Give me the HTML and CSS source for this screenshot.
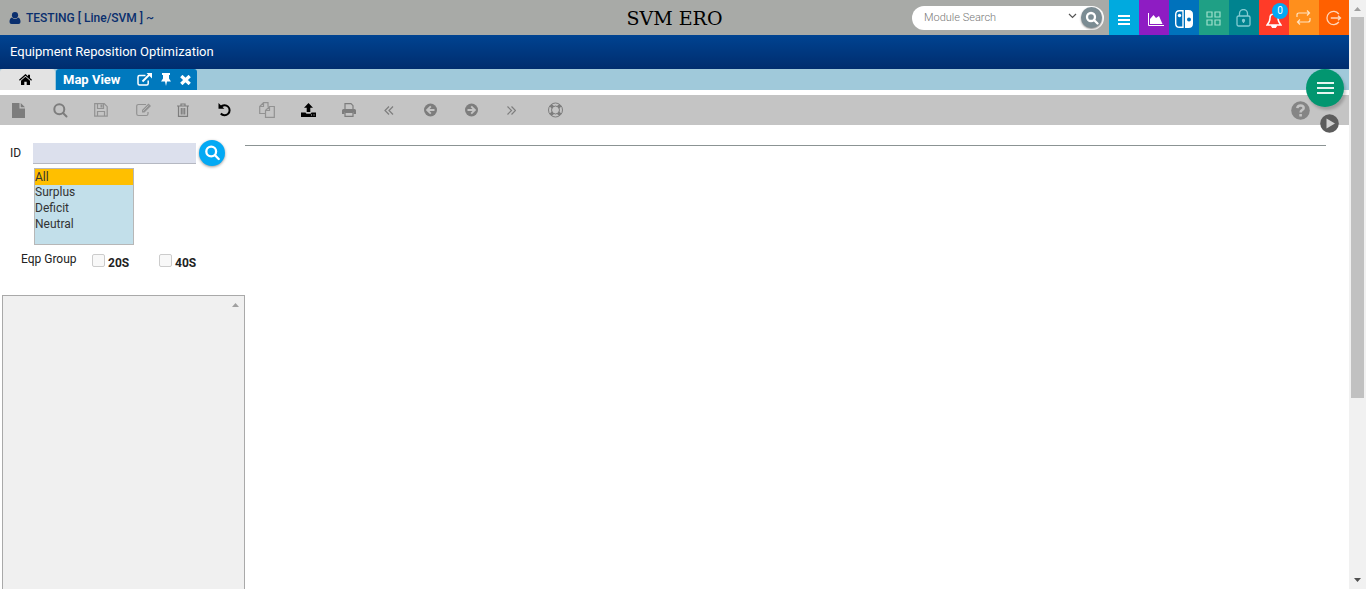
FILE: index.html
```
<!DOCTYPE html>
<html lang="en">
<head>
<meta charset="utf-8">
<title>SVM ERO</title>
<link rel="stylesheet" href="styles.css">
</head>
<body>
<div class="page">
  <header class="topbar">
    <a class="user" href="#">
      <svg width="12" height="12" viewBox="0 0 12 12" fill="currentColor"><circle cx="6" cy="3.2" r="3.1"/><path d="M3 5.5Q6 8.500 9 5.500Q11.500 6 11.500 10Q11.500 12 9.500 12H2.500Q.5 12 .5 10Q.5 6 3 5.500z"/></svg>
      <span>TESTING [ Line/SVM ] ~</span>
    </a>
    <h1 class="title">SVM ERO</h1>
    <div class="top-right">
      <form class="module-search">
        <input class="module-input" type="text" placeholder="Module Search" aria-label="Module Search">
        <svg class="caret" width="9" height="6" viewBox="0 0 9 6" fill="none" stroke="#555" stroke-width="1.2"><path d="M1 1l3.500 3.500L8 1"/></svg>
        <button class="module-go" type="button" aria-label="Search"><svg width="14" height="14" viewBox="0 0 14 14" fill="none" stroke="#fff" stroke-width="2.300"><circle cx="6" cy="6" r="4"/><path d="M9 9l3.500 3.500" stroke-linecap="round"/></svg></button>
      </form>
      <nav class="tiles">
        <button class="tile cyan" aria-label="Menu"><svg width="14" height="12" viewBox="0 0 14 12" stroke="#fff" stroke-width="2"><path d="M1 2h12M1 6h12M1 10h12"/></svg></button>
        <button class="tile purple" aria-label="Charts"><svg width="16" height="13" viewBox="0 0 16 13"><path d="M.5 0v12.500H16" fill="none" stroke="#fff"/><path d="M2 11V6l3.500-4L8 5l3-2 3.500 8z" fill="#fff"/></svg></button>
        <button class="tile blue" aria-label="Switch"><svg width="18" height="18" viewBox="0 0 18 18"><path d="M8 .7H4.500Q.7.7.7 4.500v9q0 3.800 3.800 3.800H8z" fill="none" stroke="#fff" stroke-width="1.400"/><circle cx="4.500" cy="5.500" r="1.700" fill="#fff"/><path d="M10 0h3.500Q18 0 18 4.500v9q0 4.500-4.500 4.500H10z" fill="#fff"/><circle cx="14" cy="9.500" r="2" fill="#0072bc"/></svg></button>
        <button class="tile green" aria-label="Apps"><svg width="16" height="15" viewBox="0 0 16 15" fill="none" stroke="#9fe0cc" stroke-width="1.200"><path d="M1 1h5v5H1zM9 1h5v5H9zM1 9h5v5H1zM9 9h5v5H9z"/></svg></button>
        <button class="tile teal" aria-label="Lock"><svg width="16" height="18" viewBox="0 0 16 18" fill="none" stroke="#83cbd2" stroke-width="1.300"><rect x="1" y="7" width="13" height="10" rx="1.500"/><path d="M3.500 7V4.500a4 4 0 018 0V7M7.500 11v3"/><circle cx="7.500" cy="11.500" r="1" fill="#83cbd2"/></svg></button>
        <button class="tile red" aria-label="Notifications"><svg width="16" height="16" viewBox="0 0 16 16"><path d="M1 13Q4 10 4 6Q4 2 8 2T12 6Q12 10 15 13z" fill="none" stroke="#fff" stroke-width="1.500"/><path d="M8 0v2M5.500 13.500a2.500 2.500 0 005 0z" fill="#fff" stroke="#fff"/></svg><span class="badge">0</span></button>
        <button class="tile orange" aria-label="Swap"><svg width="16" height="15" viewBox="0 0 16 15" fill="none" stroke="#ffe3c2" stroke-width="1.200"><path d="M1 7V5q0-2 2-2h10.500M11 .5L13.500 3 11 5.500M14 8v2q0 2-2 2H1.500M4 9.500L1.500 12 4 14.500"/></svg></button>
        <button class="tile deep" aria-label="Sign out"><svg width="16" height="16" viewBox="0 0 16 16" fill="none" stroke="#ffd5b8" stroke-width="1.300"><path d="M12.800 4A6.600 6.600 0 1012.800 12M4.800 8h10M12 5.800L14.500 8l-2.500 2.200"/></svg></button>
      </nav>
    </div>
  </header>
  <div class="banner">Equipment Reposition Optimization</div>
  <nav class="tabs">
    <a class="tab home" href="#" aria-label="Home"><svg width="13" height="11" viewBox="0 0 13 11"><path d="M6.500 0L9 2.200V.8h2v3.200l2 1.800-.8.900L6.500 1.700.8 6.700 0 5.800z"/><path d="M6.500 2.800L11 6.700V11H7.700V7.700H5.300V11H2V6.700z"/></svg></a>
    <div class="tab active">
      <a class="tab-label" href="#">Map View</a>
      <button class="tab-button" aria-label="Open in new window"><svg width="15" height="13" viewBox="0 0 15 13" fill="none" stroke="#fff"><path d="M8.500 2.500H2.500Q1 2.500 1 4v6.500Q1 12 2.500 12h7.200q1.500 0 1.500-1.500V7.500" stroke-width="1.500"/><path d="M5.500 8.500L12.500 1.500" stroke-width="2"/><path d="M9.500 0H15v5.500z" fill="#fff" stroke="none"/></svg></button>
      <button class="tab-button" aria-label="Pin"><svg width="10" height="13" viewBox="0 0 10 13" fill="#fff"><path d="M1 0h8v2h-1v3.500L10 8.500H6L5 13l-1-4.500H0l2-3V2H1z"/></svg></button>
      <button class="tab-button" aria-label="Close"><svg width="11" height="10" viewBox="0 0 11 10" stroke="#fff" stroke-width="3.300"><path d="M1.300 1l8.400 8M9.700 1L1.300 9"/></svg></button>
    </div>
  </nav>
  <div class="toolbar">
    <div class="tools">
      <button class="tool" aria-label="New"><svg width="13" height="15" viewBox="0 0 13 15" fill="currentColor"><path d="M0 0h7.500v5.500H13V15H0zM8.700 0L13 4.300H8.700z"/></svg></button>
      <button class="tool" aria-label="Find"><svg width="15" height="15" viewBox="0 0 15 15" fill="none" stroke="currentColor" stroke-width="2"><circle cx="6.300" cy="6.300" r="5"/><path d="M10 10l3.500 3.500" stroke-linecap="round"/></svg></button>
      <button class="tool pale" aria-label="Save"><svg width="14" height="14" viewBox="0 0 14 14" fill="none" stroke="currentColor" stroke-width="1.200"><path d="M.7.7h9.500l3 3v9.500H.7zM3.500 13V8.500h7V13M3.500 1v4.500h6V1"/><path d="M6.500 1.500h2v3h-2z" fill="currentColor" stroke="none"/></svg></button>
      <button class="tool pale" aria-label="Edit"><svg width="16" height="14" viewBox="0 0 16 14" fill="none" stroke="currentColor" stroke-width="1.200"><path d="M10 1.500H2.500Q.7 1.500.7 3.300v7.400q0 1.800 1.800 1.800h7.700q1.800 0 1.800-1.800V9"/><path d="M6 9.500V7l6.500-6.500L15 3 8.500 9.500z" fill="currentColor" stroke="none"/><path d="M7 8l5.500-5.500" stroke="#c4c4c4" stroke-width=".7"/></svg></button>
      <button class="tool" aria-label="Delete"><svg width="12" height="14" viewBox="0 0 12 14" fill="none" stroke="currentColor" stroke-width="1.200"><path d="M0 3h12M4 3V1h4v2M1.500 3v10.300h9V3M4.300 5v6.500M6 5v6.500M7.700 5v6.500"/></svg></button>
      <button class="tool on" aria-label="Undo"><svg width="14" height="14" viewBox="0 0 14 14"><path d="M2.800 4A5 5 0 112.800 10.500" fill="none" stroke="currentColor" stroke-width="2"/><path d="M.5 0v5.800h5.800z" fill="currentColor"/></svg></button>
      <button class="tool pale" aria-label="Copy"><svg width="16" height="16" viewBox="0 0 16 16" fill="none" stroke="currentColor" stroke-width="1.200"><path d="M6 11.500H.7V4.500L4.500.7H9v4M4.500.7v3.800H.7M6.500 8.500l4-4h4.800v10.800H6.500zM10.500 4.500v4h-4"/></svg></button>
      <button class="tool on" aria-label="Upload"><svg width="15" height="14" viewBox="0 0 15 14" fill="currentColor"><path d="M7.500 0L12 4.800H9.300V9H5.700V4.800H3z"/><path d="M0 9.500h4.500q.5 1.200 1.500 1.200h3q1 0 1.500-1.200H15V14H0z"/><path d="M10 12h1M12.500 12h1" stroke="#c4c4c4"/></svg></button>
      <button class="tool" aria-label="Print"><svg width="14" height="14" viewBox="0 0 14 14" fill="none" stroke="currentColor" stroke-width="1.200"><path d="M3 6V.7h6L11 2.700V6M3 9.500h8v3.800H3z"/><path d="M0 11V7.500Q0 6 1.500 6h11Q14 6 14 7.500V11h-2.500V9h-9v2z" fill="currentColor" stroke="none"/></svg></button>
      <button class="tool" aria-label="First"><svg width="11" height="9" viewBox="0 0 11 9" fill="none" stroke="currentColor" stroke-width="1.200"><path d="M6 .5l-4 4 4 4M10 .5l-4 4 4 4"/></svg></button>
      <button class="tool" aria-label="Previous"><svg width="14" height="14" viewBox="0 0 14 14"><circle cx="6.500" cy="7" r="6.500" fill="currentColor"/><path d="M10.500 7H3.500M6.800 3.300L3.100 7l3.700 3.700" fill="none" stroke="#c4c4c4" stroke-width="1.900"/></svg></button>
      <button class="tool" aria-label="Next"><svg width="14" height="14" viewBox="0 0 14 14"><circle cx="6.500" cy="7" r="6.500" fill="currentColor"/><path d="M2.500 7h7M6.200 3.300L9.900 7l-3.700 3.700" fill="none" stroke="#c4c4c4" stroke-width="1.900"/></svg></button>
      <button class="tool" aria-label="Last"><svg width="9" height="9" viewBox="0 0 9 9" fill="none" stroke="currentColor" stroke-width="1.200"><path d="M.5.500l4 4-4 4M4.500.500l4 4-4 4"/></svg></button>
      <button class="tool" aria-label="Support"><svg width="16" height="16" viewBox="0 0 16 16" fill="none" stroke="currentColor"><circle cx="7.500" cy="8" r="7"/><circle cx="7.500" cy="8" r="4"/><path d="M2.700 3.200l2.300 2.300M12.300 3.200l-2.300 2.300M2.700 12.800l2.300-2.300M12.300 12.800l-2.300-2.300" stroke-width="3.300"/></svg></button>
    </div>
    <button class="help" aria-label="Help"><svg width="19" height="19" viewBox="0 0 19 19"><circle cx="9.500" cy="9.500" r="9.300" fill="#858585"/><path d="M6.300 7.200Q6.500 4.500 9.500 4.500T12.700 7Q12.700 8.200 11 9.200Q9.600 10 9.600 11.500" fill="none" stroke="#c4c4c4" stroke-width="2.500"/><path d="M8.300 13h2.600v2.500H8.300z" fill="#c4c4c4"/></svg></button>
  </div>
  <div class="floating">
    <button class="fab" aria-label="Open menu"><svg width="17" height="12" viewBox="0 0 17 12" stroke="#e6f5f0" stroke-width="2"><path d="M0 1h17M0 6h17M0 11h17"/></svg></button>
    <button class="play" aria-label="Play"><svg width="19" height="19" viewBox="0 0 19 19"><circle cx="9.500" cy="9.500" r="9.300" fill="#5c5c5c"/><path d="M6.500 4.500l8.500 5-8.500 5z" fill="#d0d0d0"/></svg></button>
  </div>
  <main class="content">
    <form class="filters">
      <div class="id-row">
        <label for="eq-id">ID</label>
        <input class="id-input" id="eq-id" type="text">
        <button class="find" type="button" aria-label="Search ID"><svg width="16" height="16" viewBox="0 0 16 16" fill="none" stroke="#fff" stroke-width="2.300"><circle cx="7.200" cy="6.500" r="4.900"/><path d="M11 10.300l3.700 3.700" stroke-linecap="round"/></svg></button>
      </div>
      <select class="status" size="4" aria-label="Status">
        <option class="chosen">All</option>
        <option>Surplus</option>
        <option>Deficit</option>
        <option>Neutral</option>
      </select>
      <div class="group-row">
        <span class="group-label">Eqp Group</span>
        <label class="check"><input class="box" type="checkbox"><span>20S</span></label>
        <label class="check"><input class="box" type="checkbox"><span>40S</span></label>
      </div>
      <div class="list"><svg width="7" height="4" viewBox="0 0 7 4"><path d="M0 4L3.500 0 7 4z" fill="#a0a0a0"/></svg></div>
    </form>
    <section class="map"></section>
  </main>
</div>
<div class="scroll">
  <svg width="17" height="17" viewBox="0 0 17 17"><path d="M5 11l3.500-4 3.500 4z" fill="#a0a0a0"/></svg>
  <div class="thumb"></div>
  <svg class="down" width="17" height="17" viewBox="0 0 17 17"><path d="M5 6h7l-3.500 4z" fill="#505050"/></svg>
</div>
</body>
</html>
```
FILE: styles.css
```
* { box-sizing: border-box; }
body {
  margin: 0;
  height: 100vh;
  display: flex;
  overflow: hidden;
  background: #fff;
  color: #222;
  font: 12px/16px Roboto, "Liberation Sans", sans-serif;
}
svg { display: block; flex: none; }
a { color: inherit; text-decoration: none; }
button { border: 0; padding: 0; background: none; font: inherit; color: inherit; display: flex; align-items: center; justify-content: center; }
input { font: inherit; }

.page { position: relative; flex: 1; min-width: 0; display: flex; flex-direction: column; }
.topbar { flex: none; height: 35px; display: grid; grid-template-columns: 1fr auto 1fr; align-items: center; background: #a8aaa7; }
.user { display: flex; align-items: center; gap: 5px; padding-left: 9px; color: #0a2f6e; font-weight: 500; }
.title { margin: 0; color: #000; font: 19px/24px "DejaVu Serif", serif; }
.top-right { display: flex; justify-content: flex-end; align-items: center; gap: 5px; }
.module-search { display: flex; align-items: center; gap: 4px; width: 192px; height: 24px; padding: 0 2px 0 12px; border-radius: 12px; background: #fff; }
.module-input { flex: 1; min-width: 0; padding: 0; border: 0; background: none; font-size: 11px; font-weight: 300; }
.module-input::placeholder { color: #777; opacity: 1; }
.caret { margin-bottom: 4px; }
.module-go { width: 21px; height: 21px; border-radius: 50%; background: #7b8c93; box-shadow: 0 1px 2px #888; }
.tiles { display: flex; }
.tile { position: relative; width: 30px; height: 35px; }
.cyan { background: #00aadf; padding-top: 4px; }
.purple { background: #8e1cc3; padding: 3px 0 0 3px; }
.blue { background: #0072bc; padding-top: 3px; }
.green { background: #1fa085; padding-top: 2px; }
.teal { background: #00838f; }
.red { background: #ff3b28; padding-top: 4px; }
.orange { background: #ff8f1c; }
.deep { background: #ff6000; }
.badge { position: absolute; top: 3px; right: 1px; width: 16px; height: 16px; border-radius: 50%; background: #03a9f4; color: #fff; font-size: 10px; line-height: 16px; }

.banner { flex: none; height: 34px; padding: 9px 10px; color: #fff; font-size: 13px; background: linear-gradient(#004391, #002d6e); }
.tabs { flex: none; height: 21px; display: flex; background: #a0c9da; }
.tab { display: flex; align-items: center; border-radius: 3px 3px 0 0; }
.home { width: 55px; margin-right: 1px; padding-left: 19px; background: #e3e3e3; color: #000; }
.active { gap: 9px; padding: 0 6px 0 7px; background: #0079be; color: #fff; font-size: 13px; font-weight: 700; }
.tab-label { margin-right: 8px; }

.toolbar { flex: none; height: 30px; margin-top: 5px; padding: 0 39px 0 12px; display: flex; justify-content: space-between; align-items: center; background: #c4c4c4; }
.tools { display: flex; width: 577px; }
.tool { flex: 1; justify-content: flex-start; color: #7d7d7d; }
.pale { color: #929292; }
.on { color: #000; }

.floating { position: absolute; top: 69px; right: 5px; display: flex; flex-direction: column; align-items: center; gap: 7px; }
.fab { width: 38px; height: 38px; border-radius: 50%; background: #029670; box-shadow: 2px 3px 3px rgba(0, 0, 0, .2); }
.play { align-self: flex-end; margin-right: 5px; }

.content { flex: 1; min-height: 0; display: flex; }
.filters { width: 245px; padding-top: 14px; display: flex; flex-direction: column; }
.id-row { display: flex; align-items: center; height: 29px; padding: 0 0 1px 10px; }
.id-row label { width: 23px; }
.id-input { width: 163px; height: 21px; margin-right: 3px; border: 0; border-bottom: 1px solid #b5b8c2; background: #dce0ed; }
.find { width: 26px; height: 26px; border-radius: 50%; background: #03a9f4; box-shadow: 0 1px 3px #999; }
.status { width: 100px; height: 77px; margin-left: 34px; padding: 0; border: 1px solid #b7b7b7; border-radius: 0; outline: 0; overflow: hidden; background: #c2dfea; color: #333; font: inherit; }
.status option { min-height: 16px; padding: 0; }
.status .chosen { padding-top: 1px; background: #ffbf00; }
.group-row { display: flex; align-items: flex-start; padding: 6px 0 0 21px; }
.group-label { width: 71px; }
.check { display: flex; gap: 3px; width: 67px; padding-top: 3px; font-weight: 700; }
.box { appearance: none; width: 13px; height: 13px; margin: 0; border: 1px solid #ccc; border-radius: 2px; background: #f8f8f8; }
.check span { padding-top: 1px; }
.list { flex: 1; margin: 24px 0 0 2px; padding: 7px 5px 0 0; border: 1px solid #a9a9a9; border-bottom: 0; background: #f0f0f0; display: flex; justify-content: flex-end; }
.map { flex: 1; height: 1px; margin: 20px 23px 0 0; background: #8b9393; }

.scroll { flex: none; width: 17px; display: flex; flex-direction: column; background: #f1f1f1; }
.thumb { flex: 0 0 381px; margin: 0 2px; background: #c1c1c1; }
.down { margin-top: auto; }
```
